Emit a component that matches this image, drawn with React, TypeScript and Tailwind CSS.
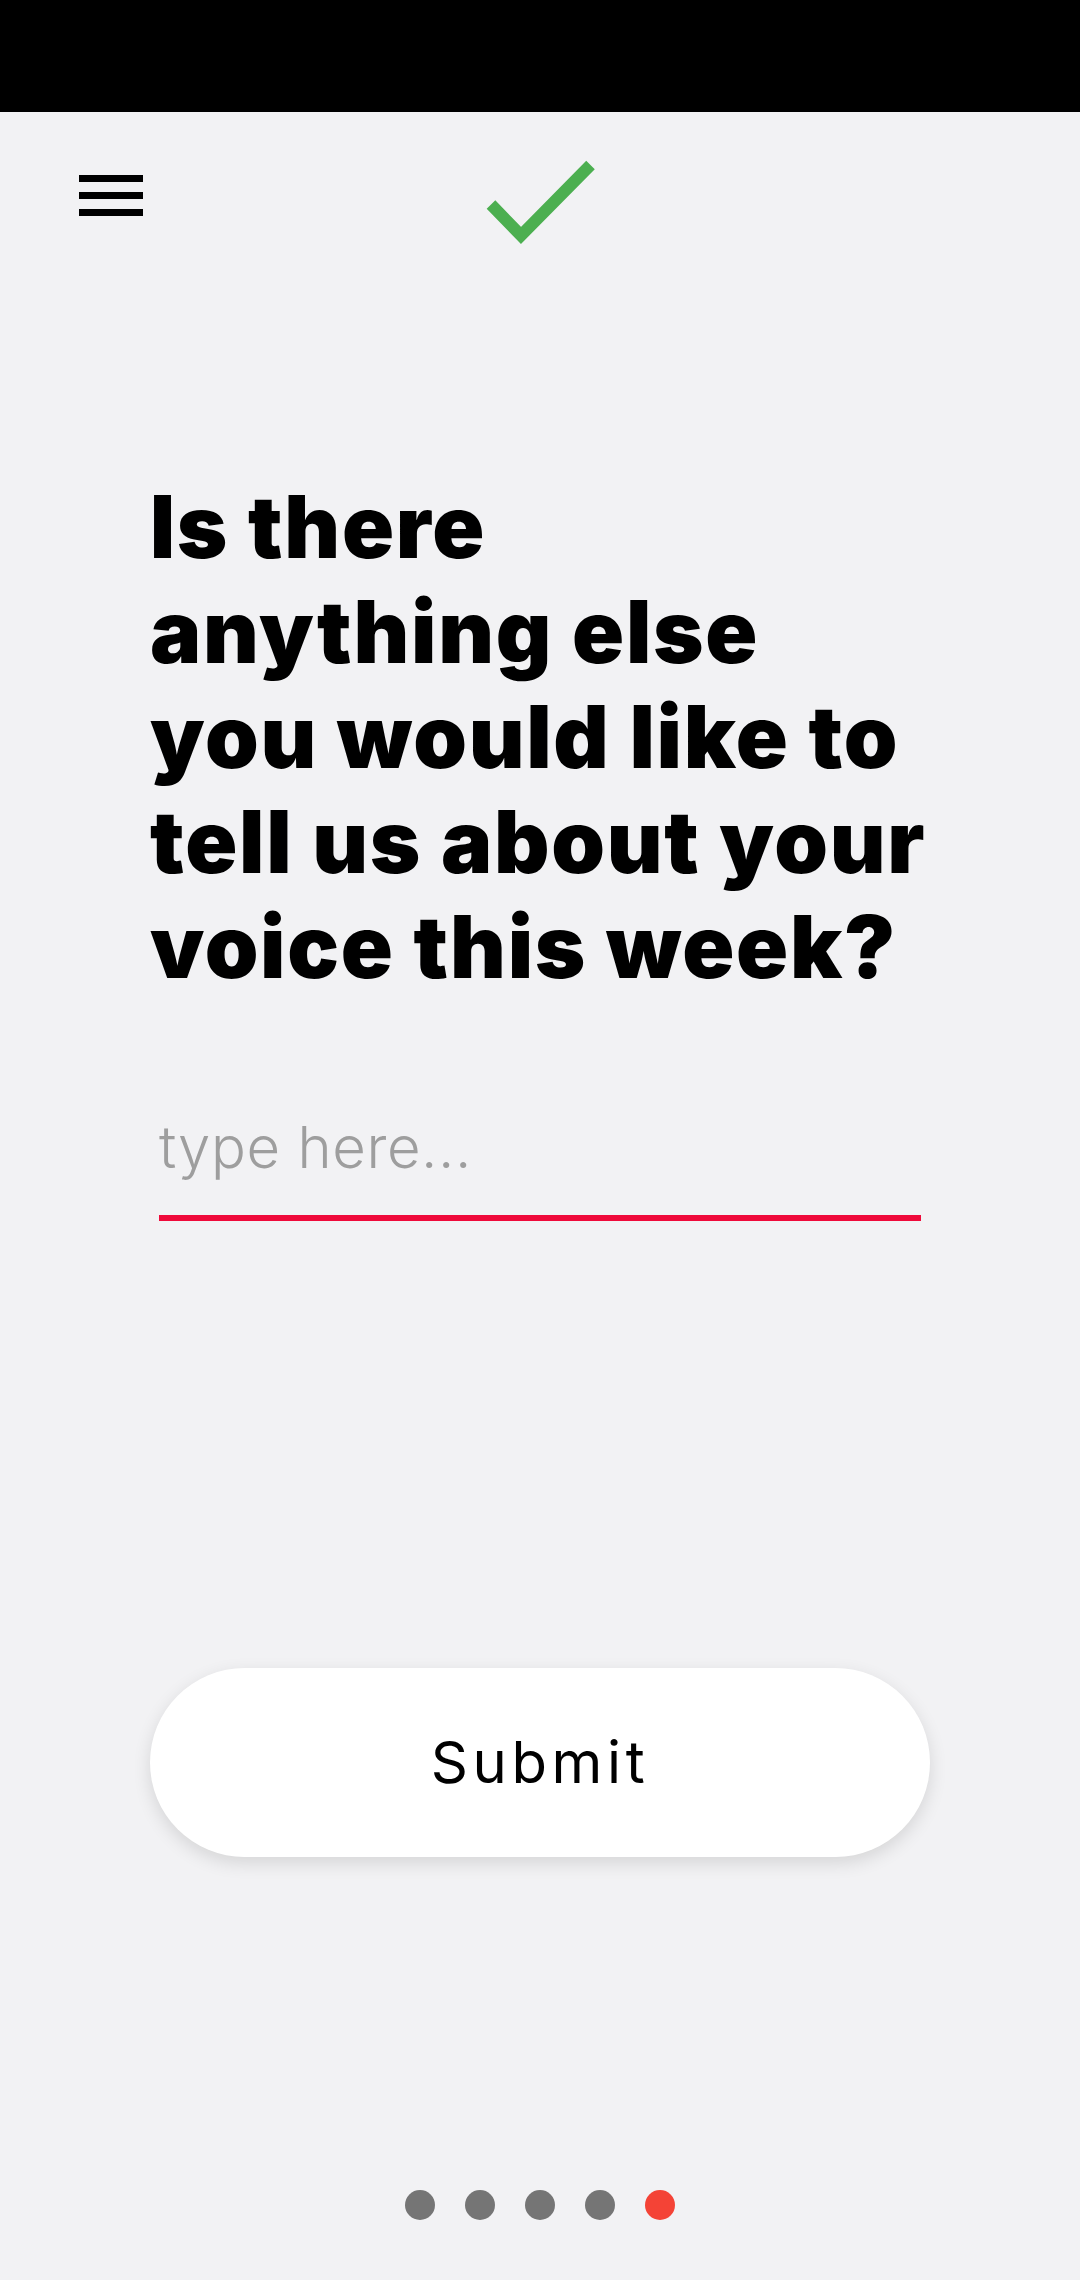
import { useState } from 'react'

const lines = ['Is there', 'anything else', 'you would like to', 'tell us about your', 'voice this week?']

export default function App() {
  const [answer, setAnswer] = useState('')
  const active = 4

  return (
    <div className="min-h-[2280px] w-[1080px] bg-[#f2f2f4] flex flex-col" style={{ fontFamily: 'Inter, "Noto Sans", sans-serif' }}>
      {/* status bar */}
      <div className="h-[112px] bg-black" />

      {/* header */}
      <div className="grid grid-cols-3 pt-[46px]">
        <div className="pl-[79px] pt-[17px]">
          <button className="flex flex-col gap-[10px]">
            <span className="block w-[64px] h-[7px] bg-black" />
            <span className="block w-[64px] h-[7px] bg-black" />
            <span className="block w-[64px] h-[7px] bg-black" />
          </button>
        </div>
        <div className="flex justify-center">
          <svg width="112" height="88" viewBox="0 0 112 88" className="ml-[2px]">
            <polyline points="6,46.5 36,77.5 105.5,7" fill="none" stroke="#4caf50" strokeWidth="12" strokeLinejoin="miter" />
          </svg>
        </div>
        <div />
      </div>

      {/* question */}
      <div className="px-[150px] mt-[229px]">
        <h1 className="text-[86px] leading-[105px] font-black tracking-[0.02em] text-black">
          {lines.map((l) => (
            <span key={l} className="block whitespace-nowrap">{l}</span>
          ))}
        </h1>

        <input
          value={answer}
          onChange={(e) => setAnswer(e.target.value)}
          placeholder="type here..."
          className="mt-[78px] ml-[9px] w-[762px] h-[143px] px-0 py-0 bg-transparent outline-none border-b-[6px] border-[#ef0a3a] text-[58px] font-light tracking-[0.01em] text-black placeholder:text-[#9e9e9e]"
        />
      </div>

      {/* submit */}
      <div className="px-[150px] mt-[447px]">
        <button className="w-full h-[189px] rounded-full bg-white shadow-[0_6px_18px_rgba(0,0,0,0.12)] text-[58px] text-black font-normal tracking-[0.08em]">
          Submit
        </button>
      </div>

      {/* pager */}
      <div className="mt-[333px] flex justify-center gap-[30px]">
        {[0, 1, 2, 3, 4].map((i) => (
          <span
            key={i}
            className={`block w-[30px] h-[30px] rounded-full ${i === active ? 'bg-[#f44336]' : 'bg-[#757575]'}`}
          />
        ))}
      </div>
    </div>
  )
}
